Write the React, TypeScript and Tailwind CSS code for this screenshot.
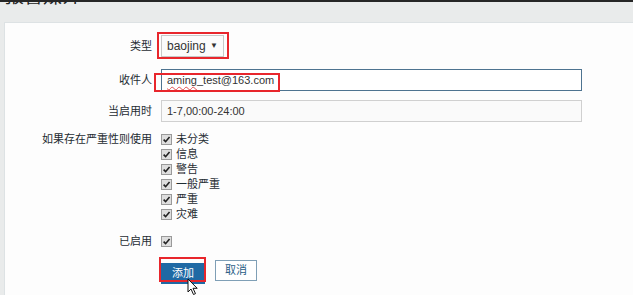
import { ReactNode } from 'react';

const font = { fontFamily: '"Liberation Sans", "Noto Sans CJK SC", sans-serif' };

const severities = ['未分类', '信息', '警告', '一般严重', '严重', '灾难'];

function Check() {
  return (
    <span className="flex h-[11px] w-[11px] items-center justify-center border border-[#9a9a9a] bg-[#dedede]">
      <svg viewBox="0 0 10 10" className="h-[9px] w-[9px]">
        <path d="M1.8 5.2 L4 7.4 L8.4 2.2" fill="none" stroke="#222" strokeWidth="1.8" />
      </svg>
    </span>
  );
}

// red annotation box drawn over the screenshot
function Mark({ className }: { className: string }) {
  return <div className={`pointer-events-none absolute z-10 border-2 border-solid border-[#e8262c] ${className}`} />;
}

function Row({ label, children, className = '' }: { label: string; children: ReactNode; className?: string }) {
  return (
    <div className={`flex ${className}`}>
      <div className="w-[147px] shrink-0 text-right text-[11px] text-[#1f2c33]">{label}</div>
      <div className="ml-[9px] flex-1">{children}</div>
    </div>
  );
}

function Cursor() {
  return (
    <svg viewBox="0 0 12 18" className="absolute left-[26px] top-[18px] z-20 h-[18px] w-[12px]">
      <path
        d="M1 1 L1 14 L4 11 L6.5 16.5 L8.5 15.6 L6 10.3 L10.2 10.3 Z"
        fill="#fff"
        stroke="#111"
        strokeWidth="1"
        strokeLinejoin="round"
      />
    </svg>
  );
}

export default function App() {
  return (
    <div className="relative h-[295px] w-[633px] overflow-hidden bg-[#e9ebeb]" style={font}>
      {/* Window edge and clipped title */}
      <div className="h-[2px] bg-[#262626]" />
      <div className="relative h-[20px] overflow-hidden">
        <div className="absolute left-[5px] top-[-19px] text-[19px] text-[#222]">报警媒介</div>
      </div>

      {/* Form panel */}
      <div className="ml-[4px] h-[273px] border-l border-t border-[#dde2e4] bg-[#fdfdfd] pt-[12px]">
        <Row label="类型" className="h-[22px] items-center">
          <div className="relative w-fit">
            <div className="flex h-[22px] w-[63px] items-center border border-[#c8c8c8] bg-[#fbfbfb] pl-[5px] text-[12px] text-[#333]">
              baojing
              <span className="ml-auto mr-[5px] text-[8px] text-[#333]">▼</span>
            </div>
            <Mark className="left-[-4px] top-[-3px] h-[27px] w-[72px]" />
          </div>
        </Row>

        <Row label="收件人" className="mt-[12px] h-[22px] items-center">
          <div className="relative h-[22px] w-[421px] border border-[#4d7390] bg-white pl-[5px] text-[11px] leading-[20px] text-[#333]">
            <span className="underline decoration-[#e05050] decoration-wavy decoration-1 underline-offset-2">aming</span>
            _test@163.com
            <Mark className="left-[-8px] top-[3px] h-[19px] w-[126px]" />
          </div>
        </Row>

        <Row label="当启用时" className="mt-[9px] h-[22px] items-center">
          <div className="h-[22px] w-[421px] border border-[#d0d0d0] bg-[#fafafa] pl-[5px] text-[11px] leading-[20px] text-[#333]">
            1-7,00:00-24:00
          </div>
        </Row>

        <Row label="如果存在严重性则使用" className="mt-[10px] leading-[15px]">
          <div className="flex flex-col">
            {severities.map((s) => (
              <div key={s} className="flex h-[15px] items-center gap-[4px] text-[11px] text-[#1f2c33]">
                <Check />
                {s}
              </div>
            ))}
          </div>
        </Row>

        <Row label="已启用" className="mt-[12px] h-[14px] items-center">
          <div className="flex items-center">
            <Check />
          </div>
        </Row>

        <Row label="" className="mt-[12px]">
          <div className="flex items-start gap-[10px]">
            <div className="relative">
              <button className="h-[21px] w-[44px] bg-[#1f69a4] text-[11px] text-white">添加</button>
              <Mark className="left-[-2px] top-[-3px] h-[25px] w-[47px]" />
              <Cursor />
            </div>
            <button className="h-[21px] w-[42px] border border-[#7f9fb6] bg-white text-[11px] text-[#2a5d86]">
              取消
            </button>
          </div>
        </Row>
      </div>
    </div>
  );
}
